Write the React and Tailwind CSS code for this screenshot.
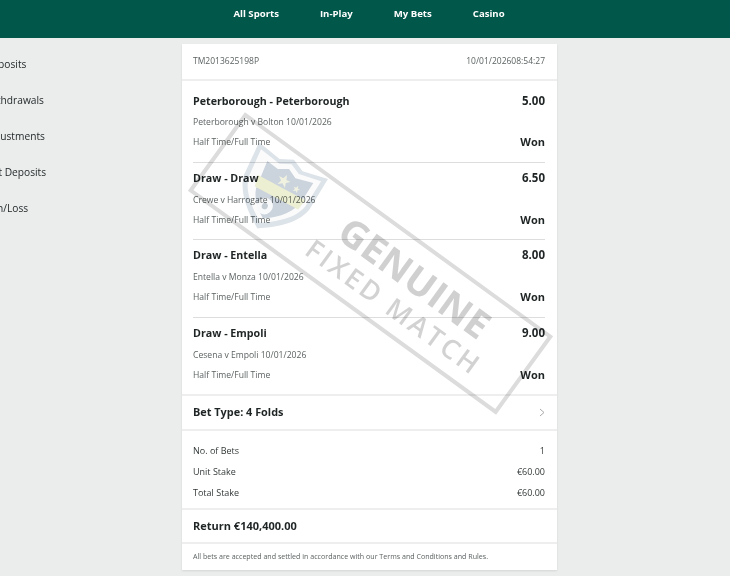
import React from "react";

const navItems = ["All Sports", "In-Play", "My Bets", "Casino"];
const sideItems = ["Deposits", "Withdrawals", "Adjustments", "Net Deposits", "Win/Loss"];

const legs = [
  { title: "Peterborough - Peterborough", odds: "5.00", match: "Peterborough v Bolton 10/01/2026", box: "h-[82px] pt-[12px]", gap: "mt-[6px]" },
  { title: "Draw - Draw", odds: "6.50", match: "Crewe v Harrogate 10/01/2026", box: "h-[77px] pt-[7px]", gap: "mt-[7px]" },
  { title: "Draw - Entella", odds: "8.00", match: "Entella v Monza 10/01/2026", box: "h-[78px] pt-[7px]", gap: "mt-[7px]" },
  { title: "Draw - Empoli", odds: "9.00", match: "Cesena v Empoli 10/01/2026", box: "h-[76px] pt-[7px]", gap: "mt-[7px]" },
];

const stakes = [
  { label: "No. of Bets", value: "1" },
  { label: "Unit Stake", value: "€60.00" },
  { label: "Total Stake", value: "€60.00" },
];

function Shield() {
  return (
    <svg className="shrink-0 ml-[28px] mt-[-2px] -rotate-[8deg] opacity-40" width="82" height="80" viewBox="0 0 82 76" preserveAspectRatio="none">
      {/* outer rim */}
      <path d="M41 1 L54 7 L80 2 L78 36 C74 54 56 66 41 75 C26 66 8 54 4 36 L2 2 L28 7 Z" fill="#a9b8c8" />
      {/* white stripe */}
      <path d="M41 6 L52 11 L75 7 L73 35 C70 50 54 61 41 69 C28 61 12 50 9 35 L7 7 L30 11 Z" fill="#f4f5f7" />
      {/* dark panel */}
      <path d="M18 14 L31 16 L41 11 L51 16 L69 12 L67 35 C63 50 50 59 41 64 C33 59 24 52 21 42 Z" fill="#7d91a7" />
      {/* stars */}
      <path d="M42 17 l1.8 4.4 4.6 0 -3.7 2.8 1.5 4.6 -4.2 -2.8 -4.2 2.8 1.5 -4.6 -3.7 -2.8 4.6 0z" fill="#d9dfb0" />
      <path d="M57 21 l1 2.6 2.7 0 -2.2 1.6 0.9 2.7 -2.4 -1.6 -2.4 1.6 0.9 -2.7 -2.2 -1.6 2.7 0z" fill="#d9dfb0" />
      {/* name band */}
      <path d="M16 30 L70 30 L68 41 L19 41 Z" fill="#cfd690" />
      {/* ball */}
      <circle cx="37" cy="53" r="8" fill="#eef0f3" />
      <circle cx="37" cy="53" r="3" fill="#6d8095" />
    </svg>
  );
}

function Watermark() {
  return (
    <div className="absolute left-[-2px] top-[171px] w-[381px] h-[97px] rotate-[36deg] border-[4px] border-[#dcdcdc] mix-blend-multiply pointer-events-none flex items-center">
      <Shield />
      <div className="ml-[10px] w-[222px] flex flex-col items-center">
        <div className="text-[38px] leading-[42px] font-bold tracking-[0.5px] text-[#b0b0b0]/60 whitespace-nowrap">GENUINE</div>
        <div className="text-[27px] leading-[32px] font-semibold tracking-[3px] text-[#b4b4b4]/60 whitespace-nowrap">FIXED MATCH</div>
      </div>
    </div>
  );
}

export default function App() {
  return (
    <div className="h-[576px] overflow-hidden bg-[#ebeded] font-['Open_Sans',sans-serif] text-[#1f2424]">
      <nav className="h-[38px] bg-[#00574a] flex justify-center pt-[7px] pl-[8px] gap-[41px] text-[9.6px] font-bold text-white">
        {navItems.map((item) => (
          <a key={item} className="leading-[14px]">{item}</a>
        ))}
      </nav>

      <div className="flex pt-[6px]">
        <ul className="w-[182px] shrink-0 ml-[-15px] mr-[15px] pt-[10px] flex flex-col gap-[16px] text-[10.2px] leading-[20px]">
          {sideItems.map((item) => (
            <li key={item} className="whitespace-nowrap">{item}</li>
          ))}
        </ul>

        <main className="relative w-[375px] h-[526px] bg-white shadow-[0_1px_2px_rgba(0,0,0,0.1)]">
          <div className="h-[37px] flex items-center justify-between pl-[11px] pr-[12px] text-[8.5px] text-[#5c6262] border-b-2 border-[#eeeeee]">
            <span>TM2013625198P</span>
            <span>10/01/202608:54:27</span>
          </div>

          <div className="pl-[11px] pr-[12px]">
            {legs.map((leg, idx) => (
              <div key={leg.title} className={`${leg.box} ${idx < 3 ? "border-b border-[#dddddd]" : ""}`}>
                <div className="flex justify-between text-[10.7px] leading-[16px] font-bold">
                  <span>{leg.title}</span>
                  <span className="text-[11.5px]">{leg.odds}</span>
                </div>
                <div className={`${leg.gap} text-[8.6px] leading-[14px] text-[#5c6262]`}>{leg.match}</div>
                <div className="mt-[6px] flex justify-between items-center text-[8.6px] leading-[14px] text-[#5c6262]">
                  <span>Half Time/Full Time</span>
                  <span className="text-[11px] font-bold text-[#1f2424]">Won</span>
                </div>
              </div>
            ))}
          </div>

          <div className="h-[37px] flex items-center justify-between pl-[11px] pr-[12px] border-y-2 border-[#eeeeee]">
            <span className="text-[10.9px] font-bold">Bet Type: 4 Folds</span>
            <svg width="6" height="9" viewBox="0 0 6 9" fill="none" stroke="#aaaaaa"><path d="M1 1l4 3.5L1 8" /></svg>
          </div>

          <div className="h-[79px] pl-[11px] pr-[12px] pt-[13px] flex flex-col gap-[7px] text-[9px] leading-[14px] text-[#333838] border-b-2 border-[#eeeeee]">
            {stakes.map((row) => (
              <div key={row.label} className="flex justify-between">
                <span>{row.label}</span>
                <span>{row.value}</span>
              </div>
            ))}
          </div>

          <div className="h-[34px] flex items-center pl-[11px] text-[11px] font-bold border-b-2 border-[#eeeeee]">Return €140,400.00</div>
          <div className="pl-[11px] pt-[5px] text-[7.1px] leading-[14px] text-[#5c6262]">
            All bets are accepted and settled in accordance with our Terms and Conditions and Rules.
          </div>

          <Watermark />
        </main>
      </div>
    </div>
  );
}
